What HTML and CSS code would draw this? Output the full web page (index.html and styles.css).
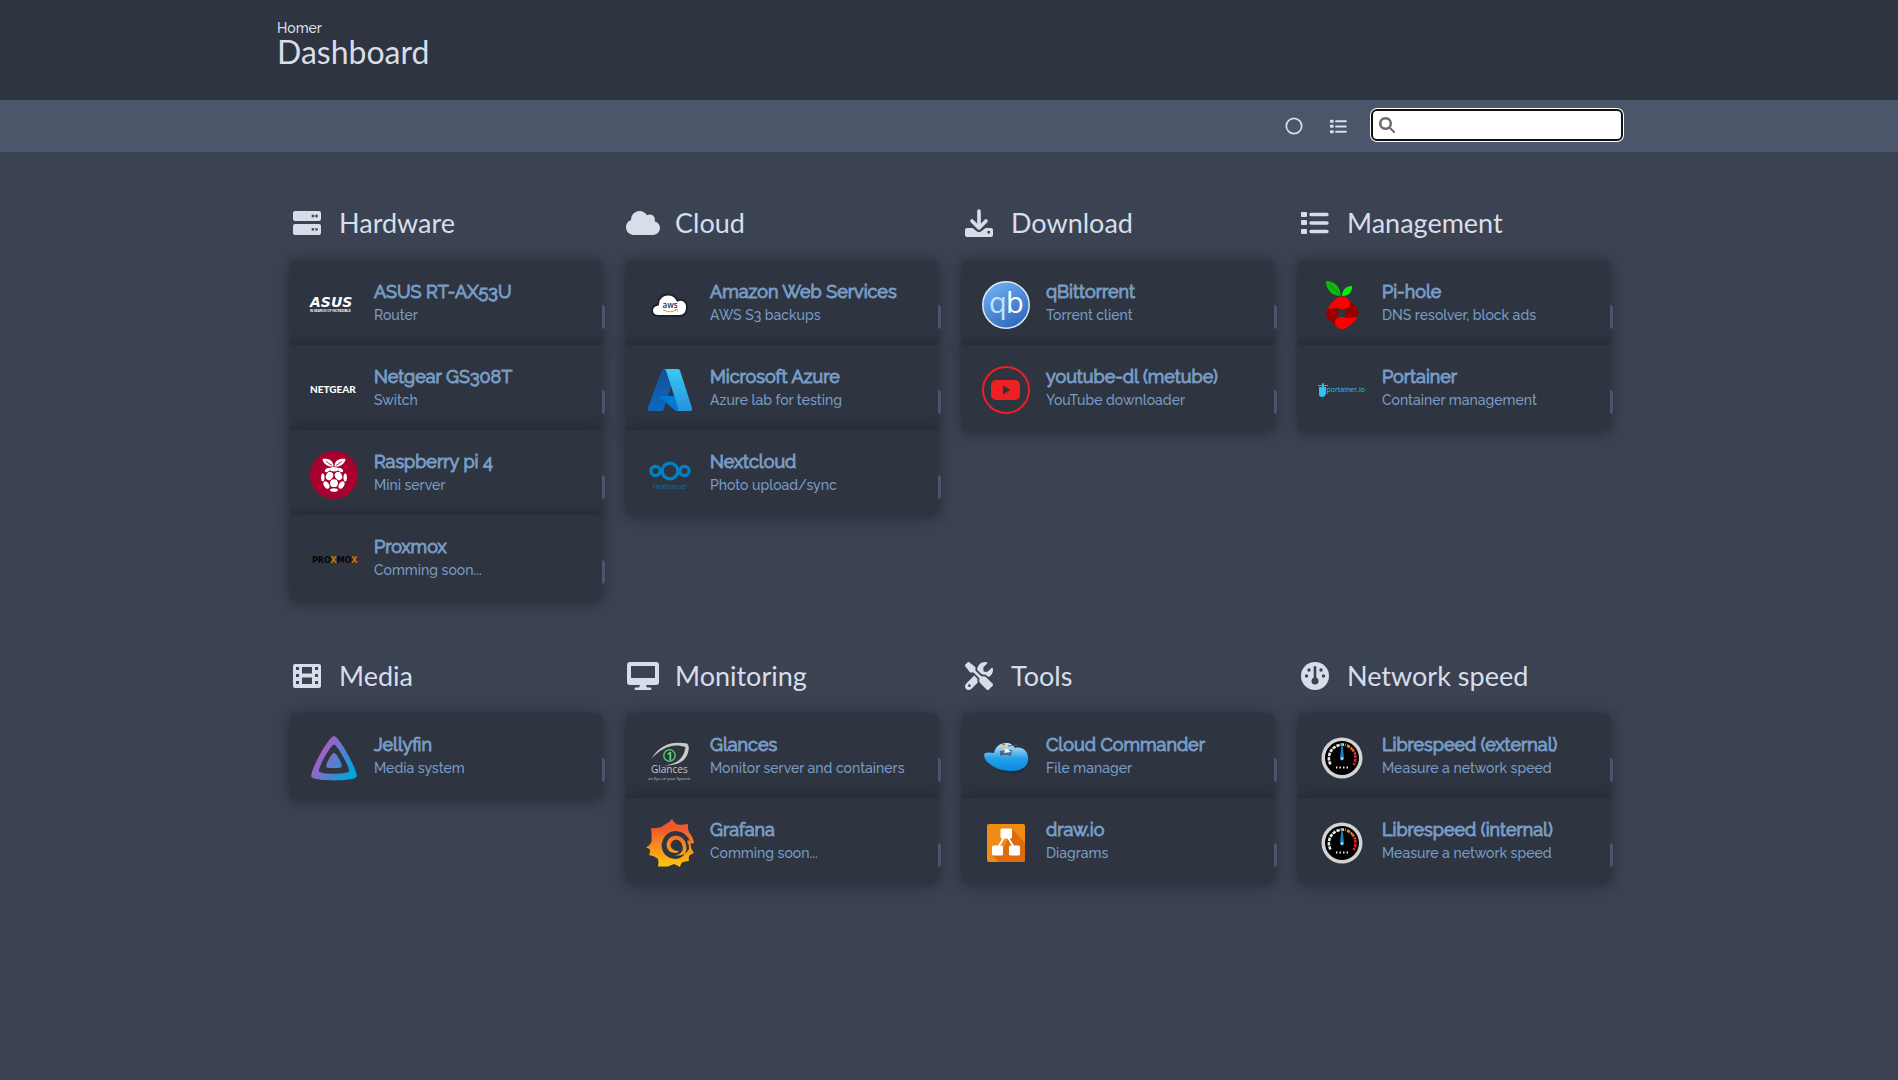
FILE: index.html
```html
<!DOCTYPE html>
<html lang="en">
<head>
<meta charset="utf-8">
<meta name="viewport" content="width=device-width, initial-scale=1">
<title>Homer - Dashboard</title>
<link rel="stylesheet" href="styles.css">
</head>
<body>
<svg class="defs" aria-hidden="true">
  <symbol id="list" viewBox="0 0 28 24">
    <path fill="currentColor" d="M1 1h4q1 0 1 1v3q0 1-1 1H1Q0 6 0 5V2q0-1 1-1zM1 9h4q1 0 1 1v3q0 1-1 1H1q-1 0-1-1v-3q0-1 1-1zM1 18h4q1 0 1 1v3q0 1-1 1H1q-1 0-1-1v-3q0-1 1-1z"/>
    <path fill="none" stroke="currentColor" stroke-width="3.4" stroke-linecap="round" d="M10 3.5h16M10 12h16M10 20.500h16"/>
  </symbol>
  <symbol id="gauge" viewBox="0 0 48 48">
    <circle cx="24" cy="24" r="20.500" fill="#d3d3d3"/><circle cx="24" cy="24" r="17" fill="#000"/>
    <g fill="none" stroke-width="2.600">
      <path stroke="#e8e8e8" stroke-dasharray="3.300 1" d="M12.500 30.500A13.500 13.500 0 0 1 27.500 11"/>
      <path stroke="#f08a1c" stroke-dasharray="3.300 1" d="M29 11.500A13.500 13.500 0 0 1 34 15"/>
      <path stroke="#f0502a" stroke-dasharray="3.300 1" d="M34 15A13.500 13.500 0 0 1 37 20"/>
      <path stroke="#dd2230" stroke-dasharray="3.300 1" d="M37 20.500A13.500 13.500 0 0 1 35.500 31"/>
    </g>
    <path fill="#1c7fc4" d="M23.500 10h1L26 24a2 2.500 0 0 1-4 0z"/><circle cx="24" cy="24.500" r="1.200" fill="#bfe0f5"/>
    <path stroke="#e8e8e8" stroke-width="2" stroke-dasharray="1.500 2" d="M18 33.500h12.500"/>
  </symbol>
</svg>

<header class="header">
  <div class="container">
    <p class="header-sub">Homer</p>
    <h1 class="header-title">Dashboard</h1>
  </div>
</header>

<nav class="navbar">
  <div class="container navbar-inner">
    <button class="nav-btn" type="button" aria-label="Toggle theme">
      <svg width="18" height="18" viewBox="0 0 18 18"><circle cx="9" cy="9" r="7.700" fill="none" stroke="currentColor" stroke-width="1.700"/></svg>
    </button>
    <button class="nav-btn" type="button" aria-label="Toggle layout">
      <svg width="17" height="15"><use href="#list"/></svg>
    </button>
    <form class="search">
      <label for="search" aria-label="Search"><svg width="16" height="16" viewBox="0 0 512 512"><path fill="#6b6b6b" d="M416 208c0 45.900-14.900 88.300-40 122.700L502.600 457.400c12.500 12.500 12.500 32.800 0 45.300s-32.800 12.500-45.300 0L330.700 376c-34.400 25.200-76.800 40-122.700 40C93.100 416 0 322.900 0 208S93.100 0 208 0S416 93.100 416 208zM208 336a128 128 0 1 0 0-256 128 128 0 1 0 0 256z"/></svg></label>
      <input id="search" type="text" autocomplete="off">
    </form>
  </div>
</nav>

<main class="container groups">
  <section class="group">
    <h2 class="group-title"><svg class="group-icon" width="28" height="28" viewBox="0 0 28 28"><path fill="currentColor" fill-rule="evenodd" d="M2 2h24q2 0 2 2v6q0 2-2 2H2q-2 0-2-2V4q0-2 2-2zm16.700 3.800v2.400h2.400V5.800zm3.600 0v2.400h2.400V5.800zM2 15h24q2 0 2 2v7q0 2-2 2H2q-2 0-2-2v-7q0-2 2-2zm16.700 4.200v2.400h2.400v-2.400zm3.600 0v2.400h2.400v-2.400z"/></svg>Hardware</h2>
    <a class="card" href="#"><svg class="logo" viewBox="0 0 48 48"><g fill="#fff" font-weight="700"><text x="0" y="26" font-family="DejaVu Sans, sans-serif" font-size="14" font-style="italic">ASUS</text><text x="0" y="31" font-family="Liberation Sans, sans-serif" font-size="3">IN SEARCH OF INCREDIBLE</text></g></svg><div><p class="name">ASUS RT-AX53U</p><p class="desc">Router</p></div><i class="tag"></i></a>
    <a class="card" href="#"><svg class="logo" viewBox="0 0 48 48"><text x="0" y="27" fill="#fff" font-family="Lato, sans-serif" font-weight="900" font-size="10">NETGEAR</text></svg><div><p class="name">Netgear GS308T</p><p class="desc">Switch</p></div><i class="tag"></i></a>
    <a class="card" href="#"><svg class="logo" viewBox="0 0 48 48"><circle cx="24" cy="24" r="24" fill="#a8002f"/><g fill="#fff"><path d="M23.500 15.500C18 16.500 13 12.500 12.500 8c5-1 11 .5 11 7.500zM24.500 15.500C30 16.500 35 12.500 35.500 8c-5-1-11 .5-11 7.500z"/><ellipse cx="24" cy="18.200" rx="4.200" ry="2.200"/><ellipse cx="17.500" cy="19" rx="3" ry="1.800" transform="rotate(-30 17.500 19)"/><ellipse cx="30.500" cy="19" rx="3" ry="1.800" transform="rotate(30 30.500 19)"/><ellipse cx="19.500" cy="25" rx="3.500" ry="4.200" transform="rotate(30 19.500 25)"/><ellipse cx="28.500" cy="25" rx="3.500" ry="4.200" transform="rotate(-30 28.500 25)"/><ellipse cx="12.800" cy="26.500" rx="1.700" ry="4"/><ellipse cx="35.200" cy="26.500" rx="1.700" ry="4"/><circle cx="24" cy="32.200" r="3.900"/><ellipse cx="16.500" cy="34" rx="2.600" ry="4" transform="rotate(-30 16.500 34)"/><ellipse cx="31.500" cy="34" rx="2.600" ry="4" transform="rotate(30 31.500 34)"/><ellipse cx="24" cy="39" rx="4" ry="1.800"/></g><path stroke="#a8002f" stroke-width=".8" d="M16 10.500l6 4M32 10.500l-6 4"/></svg><div><p class="name">Raspberry pi 4</p><p class="desc">Mini server</p></div><i class="tag"></i></a>
    <a class="card" href="#"><svg class="logo" viewBox="0 0 48 48"><text x="2" y="27" fill="#050505" font-family="DejaVu Sans, sans-serif" font-weight="700" font-size="8">PRO<tspan fill="#d4700c">X</tspan>MO<tspan fill="#d4700c">X</tspan></text></svg><div><p class="name">Proxmox</p><p class="desc">Comming soon...</p></div><i class="tag"></i></a>
  </section>

  <section class="group">
    <h2 class="group-title"><svg class="group-icon" width="34" height="28" viewBox="0 0 640 512"><path fill="currentColor" d="M0 336c0 79.500 64.500 144 144 144H512c70.700 0 128-57.300 128-128c0-61.900-44-113.600-102.400-125.400c4.100-10.700 6.400-22.400 6.400-34.600c0-53-43-96-96-96c-19.700 0-38.100 6-53.300 16.200C367 64.200 315.300 32 256 32C167.600 32 96 103.600 96 192c0 2.700 .1 5.400 .2 8.100C40.200 219.800 0 273.200 0 336z"/></svg>Cloud</h2>
    <a class="card" href="#"><svg class="logo" viewBox="0 0 48 48"><path fill="#fff" stroke="#1d232e" stroke-width="2" d="M13 35c-4 0-7-2-7-5.500S9 24 12 23.500C12 17 17 13.500 22 13.500c5 0 8 3 9.500 6 5-2.500 10 1.500 9.500 7.500-.3 5-3 8-7.500 8z"/><text x="16.500" y="27" fill="#26303e" font-family="Open Sans, sans-serif" font-weight="600" font-size="8">aws</text><path fill="none" stroke="#f79a1e" d="M17 29q7 3.500 13.500 0M29 28.500h2.500v2"/></svg><div><p class="name">Amazon Web Services</p><p class="desc">AWS S3 backups</p></div><i class="tag"></i></a>
    <a class="card" href="#"><svg class="logo" viewBox="0 0 48 48"><defs><linearGradient id="az1" x1="0" y1="0" x2="0" y2="1"><stop stop-color="#174f93"/><stop offset="1" stop-color="#0b69bf"/></linearGradient><linearGradient id="az2" x1="0" y1="0" x2="0" y2="1"><stop stop-color="#3bc9f3"/><stop offset="1" stop-color="#2790df"/></linearGradient></defs><path fill="url(#az1)" d="M18 3h13L17.500 43.500Q17 45 15.500 45H4q-3-.5-2-3.500L15.500 5q.8-2 2.500-2z"/><path fill="#0078d4" d="M13.500 30H31l3 15h-3q-1.500 0-2.500-1L14 31.500q-1-1 -.5-1.500z"/><path fill="url(#az2)" d="M18 3h14q1.500 0 2 1.500L46 42q.5 3-2 3H30q3-.5 2-3.500L20 4.500Q19.500 3 18 3z"/></svg><div><p class="name">Microsoft Azure</p><p class="desc">Azure lab for testing</p></div><i class="tag"></i></a>
    <a class="card" href="#"><svg class="logo" viewBox="0 0 48 48"><g fill="none" stroke="#0082c9" stroke-width="3.200"><circle cx="24" cy="20" r="7.800"/><circle cx="9.500" cy="20" r="4.600"/><circle cx="38.500" cy="20" r="4.600"/></g><text x="6.500" y="38" fill="#0a6fa9" font-family="Open Sans, sans-serif" font-size="7">Nextcloud</text></svg><div><p class="name">Nextcloud</p><p class="desc">Photo upload/sync</p></div><i class="tag"></i></a>
  </section>

  <section class="group">
    <h2 class="group-title"><svg class="group-icon" width="28" height="28" viewBox="0 0 28 28"><path fill="none" stroke="currentColor" stroke-width="3.600" stroke-linecap="round" stroke-linejoin="round" d="M14 2v16M7 12l7 7 7-7"/><path fill="currentColor" fill-rule="evenodd" d="M2 19h5.500l4.500 3.500q2 1.200 4 0l4.500-3.500H26q2 0 2 2v5q0 2-2 2H2q-2 0-2-2v-5q0-2 2-2zm20.500 3v2.500H25V22z"/></svg>Download</h2>
    <a class="card" href="#"><svg class="logo" viewBox="0 0 48 48"><defs><linearGradient id="qb" x1=".2" y1="0" x2=".8" y2="1"><stop stop-color="#71b0f2"/><stop offset="1" stop-color="#2c65bb"/></linearGradient></defs><circle cx="24" cy="24" r="23.200" fill="url(#qb)" stroke="#dbe9f7" stroke-width="1.500"/><g font-family="Open Sans, sans-serif" font-size="29"><text x="7" y="32" fill="#c0e4ff">q</text><text x="24" y="32" fill="#fff">b</text></g></svg><div><p class="name">qBittorrent</p><p class="desc">Torrent client</p></div><i class="tag"></i></a>
    <a class="card" href="#"><svg class="logo" viewBox="0 0 48 48"><circle cx="24" cy="24" r="23" fill="none" stroke="#ed2024" stroke-width="2"/><rect x="9" y="14" width="29" height="20" rx="5" fill="#ed2024"/><path fill="#2e3440" d="M21 19.500l7.500 4.500-7.500 4.500z"/></svg><div><p class="name">youtube-dl (metube)</p><p class="desc">YouTube downloader</p></div><i class="tag"></i></a>
  </section>

  <section class="group">
    <h2 class="group-title"><svg class="group-icon" width="28" height="24"><use href="#list"/></svg>Management</h2>
    <a class="card" href="#"><svg class="logo" viewBox="0 0 48 48"><path fill="#0fb90f" d="M23 15C14 15 8 9 8 0c8 0 14 5 15 15z"/><path fill="#0aec0a" d="M24 15c0-6 4-10 10-10 .5 6-3 10-10 10z"/><path stroke="#078a10" fill="none" d="M11 3l12 12"/><path fill="#980000" d="M17 26c3 .5 3.500 3 3.500 6S18 38 17 44l-7-6.500q-4-5 0-10l5-4zM31 38c-3-.5-3.500-3-3.500-6s3.500-6 4-12l7 6.500q4 5 0 10l-5 4z"/><path fill="red" d="M24 15.500c4 0 8 3.500 8 7s-3 5.500-7 5.500c-3 0-5-1.500-8-1-3 .2-5 .5-7 1.500 1-5 9-13 14-13zM24 48c-4 0-7-3-7-6.500s3-5.500 7-5.500c3 0 5 1.500 8 1 3-.2 5-.5 7-1.500-1 5-10 12.500-15 12.500z"/></svg><div><p class="name">Pi-hole</p><p class="desc">DNS resolver, block ads</p></div><i class="tag"></i></a>
    <a class="card" href="#"><svg class="logo" viewBox="0 0 48 48"><path fill="#2ec4ef" d="M3 21h1v-3.500h1V21h3v6.500q-1 3.500-4 3.500t-3-3V21z"/><path stroke="#2ec4ef" stroke-width=".9" d="M0 19.500h10M5.500 17v8M1 22.500h6"/><text x="8.500" y="26" fill="#28c4e8" font-family="Open Sans, sans-serif" font-size="7">portainer.io</text></svg><div><p class="name">Portainer</p><p class="desc">Container management</p></div><i class="tag"></i></a>
  </section>

  <section class="group">
    <h2 class="group-title"><svg class="group-icon" width="28" height="28" viewBox="0 0 28 28"><path fill="currentColor" fill-rule="evenodd" d="M2 2h24q2 0 2 2v20q0 2-2 2H2q-2 0-2-2V4q0-2 2-2zm1 3v3h3V5zm0 7v3h3v-3zm0 7v3h3v-3zM22 5v3h3V5zm0 7v3h3v-3zm0 7v3h3v-3zM9 5v6.500h10V5zm0 10.500V22h10v-6.500z"/></svg>Media</h2>
    <a class="card" href="#"><svg class="logo" viewBox="0 0 48 48"><defs><linearGradient id="jf" gradientUnits="userSpaceOnUse" x1="10" y1="18" x2="42" y2="38"><stop stop-color="#aa5cc3"/><stop offset="1" stop-color="#00a4dc"/></linearGradient></defs><g fill="url(#jf)"><path fill-rule="evenodd" d="M24 2c5 0 25 36 22.500 41-2.500 4.500-42.500 4.500-45 0C-1 38 19 2 24 2zm0 8.500C21 10.500 7.500 34.500 9 37.500s28.500 3 30 0S27 10.500 24 10.500z"/><path d="M24 19c-2.500 0-9 11.500-7.500 14 1 1.500 14 1.500 15 0 1.500-2.500-5-14-7.500-14z"/></g></svg><div><p class="name">Jellyfin</p><p class="desc">Media system</p></div><i class="tag"></i></a>
  </section>

  <section class="group">
    <h2 class="group-title"><svg class="group-icon" width="32" height="28" viewBox="0 0 32 28"><path fill="currentColor" fill-rule="evenodd" d="M3 0h26q3 0 3 3v17q0 3-3 3H19l1 2.500h3q1.500 0 1.500 1.200T23 28H9q-1.500 0-1.500-1.300T9 25.500h3l1-2.500H3q-3 0-3-3V3q0-3 3-3zm1 4v12h24V4z"/></svg>Monitoring</h2>
    <a class="card" href="#"><svg class="logo" viewBox="0 0 48 48"><path fill="#c8cbc9" d="M5 25C14 10 27 7 41 9.500c2 2 2 4 1.500 7C41 26 33 32 18 31.500 31 30.500 38 24 39.500 13 27 8.500 15 14 5 25z"/><circle cx="23.500" cy="21.500" r="5.700" fill="none" stroke="#57c26b" stroke-width="1.500"/><text x="20.500" y="26" fill="#6ad57f" font-family="Open Sans, sans-serif" font-weight="700" font-size="11">1</text><g fill="#c4c7c6" font-family="Open Sans, sans-serif"><text x="5" y="39" font-size="10">Glances</text><text x="2" y="46" font-size="4">an Eye on your System</text></g></svg><div><p class="name">Glances</p><p class="desc">Monitor server and containers</p></div><i class="tag"></i></a>
    <a class="card" href="#"><svg class="logo" viewBox="0 0 48 48"><defs><linearGradient id="gf" x1="0" y1="0" x2="0" y2="1"><stop offset=".2" stop-color="#f05a2b"/><stop offset="1" stop-color="#fcc80d"/></linearGradient></defs><path fill="url(#gf)" fill-rule="evenodd" d="M26 0q2 4 5 5.500 5 .5 11-.5-.5 5 1 8 4 5 5 10v1l-3 .5q-4-12-15-12.500Q18 12.500 15.500 26q1 13 14 14 9-.5 11-9.500 0-13-11-14-8.500 1-9 9.500.5 7.500 8.500 8 3 0 4-2-7 0-8.500-5 0-5.500 5.500-6.500 6 .5 7 8.500-.5 6-8 7.500Q39 37.500 43 30q0-5-2-8l3-1q1 4 1 8l3 5q-3 1-5 3-.5 3 0 5-4 0-7 1.500-1.500 2-2 4.500-3-2-6-3-3 1-6 2.500H12q1-4 0-7.500-3-3-9-4Q4.500 33 4 30.500 2 29 0 28.500q4-2 5.500-5.500Q6 17 5 9q6 .5 10-1l5-3q3-1 6-5z"/></svg><div><p class="name">Grafana</p><p class="desc">Comming soon...</p></div><i class="tag"></i></a>
  </section>

  <section class="group">
    <h2 class="group-title"><svg class="group-icon" width="28" height="28" viewBox="0 0 512 512"><path fill="currentColor" d="M78.600 5C69.100-2.400 55.600-1.500 47 7L7 47c-8.500 8.500-9.400 22-2.100 31.600l80 104c4.500 5.900 11.600 9.400 19 9.400h54.100l109 109c-14.700 29-10 65.400 14.300 89.600l112 112c12.500 12.500 32.800 12.500 45.300 0l64-64c12.500-12.500 12.500-32.800 0-45.300l-112-112c-24.200-24.200-60.600-29-89.600-14.300l-109-109V104c0-7.500-3.500-14.500-9.400-19L78.600 5zM19.900 396.100C7.200 408.800 0 426.100 0 444.100C0 481.600 30.400 512 67.900 512c18 0 35.300-7.200 48-19.900L233.700 374.300c-7.800-20.900-9-43.600-3.600-65.100l-61.700-61.700L19.900 396.100zM512 144c0-10.500-1.100-20.700-3.200-30.500c-2.400-11.200-16.100-14.100-24.200-6l-63.900 63.900c-3 3-7.100 4.700-11.300 4.700H352c-8.800 0-16-7.200-16-16V102.600c0-4.200 1.700-8.300 4.700-11.300l63.900-63.900c8.100-8.100 5.200-21.800-6-24.200C388.700 1.100 378.500 0 368 0C288.500 0 224 64.500 224 144l0 .8 85.300 85.300c36-9.100 75.800 .5 104 28.700L429 274.500c49-23 83-72.800 83-130.500zM56 432a24 24 0 1 1 48 0 24 24 0 1 1 -48 0z"/></svg>Tools</h2>
    <a class="card" href="#"><svg class="logo" viewBox="0 0 48 48"><defs><linearGradient id="cc" x1="0" y1="0" x2="0" y2="1"><stop stop-color="#c9e9fb"/><stop offset=".55" stop-color="#25a0e8"/><stop offset="1" stop-color="#068de0"/></linearGradient></defs><path fill="#20252e" opacity=".6" d="M4 29c5 10 33 12 41 2-2 8-12 9-18 8S8 36 4 29z"/><path fill="url(#cc)" d="M2 21c0-3 5-3 10-2 1-6 6-10 12-10 5 0 7 2 9 5 8-2 14 4 13 12-1 8-8 11-17 11C16 37 2 29 2 21z"/><path fill="#4a6690" d="M18 17l12-1-1 6q-5-2-11 0z"/><path fill="#f4bd84" d="M20 11h4v5h-4z"/><path fill="#fff" d="M24 14l5 4-7 1z"/><path stroke="#5c5f64" stroke-width="1.200" d="M26 12l9-1M19 9.500l4 1"/></svg><div><p class="name">Cloud Commander</p><p class="desc">File manager</p></div><i class="tag"></i></a>
    <a class="card" href="#"><svg class="logo" viewBox="0 0 48 48"><rect x="5" y="5" width="38" height="38" rx="2" fill="#f08c15"/><path fill="#df6c0c" d="M30 10l13 14v17q0 2-2 2H17l-7-7 10-4 4-8z"/><path stroke="#fff" stroke-width="1.800" d="M23 17l-8 13M25 17l8 13"/><g fill="#fff"><rect x="18.500" y="9.500" width="11.500" height="10" rx="1.500"/><rect x="10" y="26.500" width="11" height="10" rx="1.500"/><rect x="27" y="26.500" width="11" height="10" rx="1.500"/></g></svg><div><p class="name">draw.io</p><p class="desc">Diagrams</p></div><i class="tag"></i></a>
  </section>

  <section class="group">
    <h2 class="group-title"><svg class="group-icon" width="28" height="28" viewBox="0 0 28 28"><circle cx="14" cy="14" r="14" fill="currentColor"/><g fill="#3b4252"><circle cx="5.500" cy="14" r="1.700"/><circle cx="22.500" cy="14" r="1.700"/><circle cx="8" cy="8" r="1.700"/><circle cx="20" cy="8" r="1.700"/><circle cx="14" cy="19" r="3.500"/><rect x="12.700" y="4" width="2.600" height="14" rx="1.300"/></g></svg>Network speed</h2>
    <a class="card" href="#"><svg class="logo"><use href="#gauge"/></svg><div><p class="name">Librespeed (external)</p><p class="desc">Measure a network speed</p></div><i class="tag"></i></a>
    <a class="card" href="#"><svg class="logo"><use href="#gauge"/></svg><div><p class="name">Librespeed (internal)</p><p class="desc">Measure a network speed</p></div><i class="tag"></i></a>
  </section>
</main>
</body>
</html>
```
FILE: styles.css
```css
* { box-sizing: border-box; }

body {
  margin: 0;
  min-height: 100vh;
  background: #3b4252;
  color: #d8dee9;
  font-family: Raleway, Lato, sans-serif;
  font-size: 14px;
  font-weight: 500;
}

h1, h2, p { margin: 0; }

.defs { display: none; }

.container {
  width: 100%;
  max-width: 1344px;
  margin: 0 auto;
}

.header {
  min-height: 100px;
  padding-top: 18px;
  background: #2e3440;
}

.header-sub { line-height: 20px; }

.header-title {
  font-family: Lato, sans-serif;
  font-size: 32px;
  font-weight: 400;
  line-height: 28px;
}

.navbar { background: #4c566a; }

.navbar-inner {
  display: flex;
  align-items: center;
  justify-content: flex-end;
  min-height: 52px;
}

.nav-btn {
  display: flex;
  align-items: center;
  justify-content: center;
  width: 44px;
  height: 44px;
  padding: 0;
  border: 0;
  background: none;
  color: inherit;
}

.search {
  display: flex;
  align-items: center;
  width: 248px;
  margin: 0 0 2px 13px;
  border-radius: 4px;
  background: #fff;
  outline: 2px solid #101010;
  box-shadow: 0 0 0 3px #fff;
}

.search label { display: flex; padding-left: 6px; }

.search input {
  flex: 1;
  min-width: 0;
  height: 28px;
  border: 0;
  outline: 0;
  background: none;
  font: inherit;
}

.groups {
  display: grid;
  grid-template-columns: repeat(4, minmax(0, 1fr));
  gap: 59px 24px;
  padding: 54px 11px 54px 13px;
}

.group-title {
  display: flex;
  align-items: center;
  gap: 15px;
  margin-bottom: 20px;
  font-family: Lato, sans-serif;
  font-size: 27px;
  font-weight: 400;
  line-height: 34px;
}

.group-icon {
  flex: none;
  box-sizing: content-box;
}

.group-icon[width="28"] { padding: 0 3px; }
.group-icon[width="32"] { padding: 0 1px; }

.card {
  position: relative;
  display: flex;
  align-items: center;
  gap: 16px;
  min-height: 85px;
  padding: 0 20px;
  background: #2e3440;
  box-shadow: 0 2px 15px rgba(0, 0, 0, 0.4);
  color: #779cc5;
  text-decoration: none;
}

.group-title + .card { border-radius: 5px 5px 0 0; }
.card:last-child { border-radius: 0 0 5px 5px; }
.group-title + .card:last-child { border-radius: 5px; }

.logo {
  flex: none;
  width: 48px;
  height: 48px;
  margin-top: 4px;
  overflow: visible;
}

.name {
  font-size: 18px;
  font-weight: 400;
  line-height: 24px;
  -webkit-text-stroke: 1px currentColor;
}

.desc { line-height: 22px; }

.tag {
  position: absolute;
  top: 45px;
  left: 100%;
  width: 3px;
  height: 24px;
  border-radius: 0 3px 3px 0;
  background: #4c566a;
}
```
